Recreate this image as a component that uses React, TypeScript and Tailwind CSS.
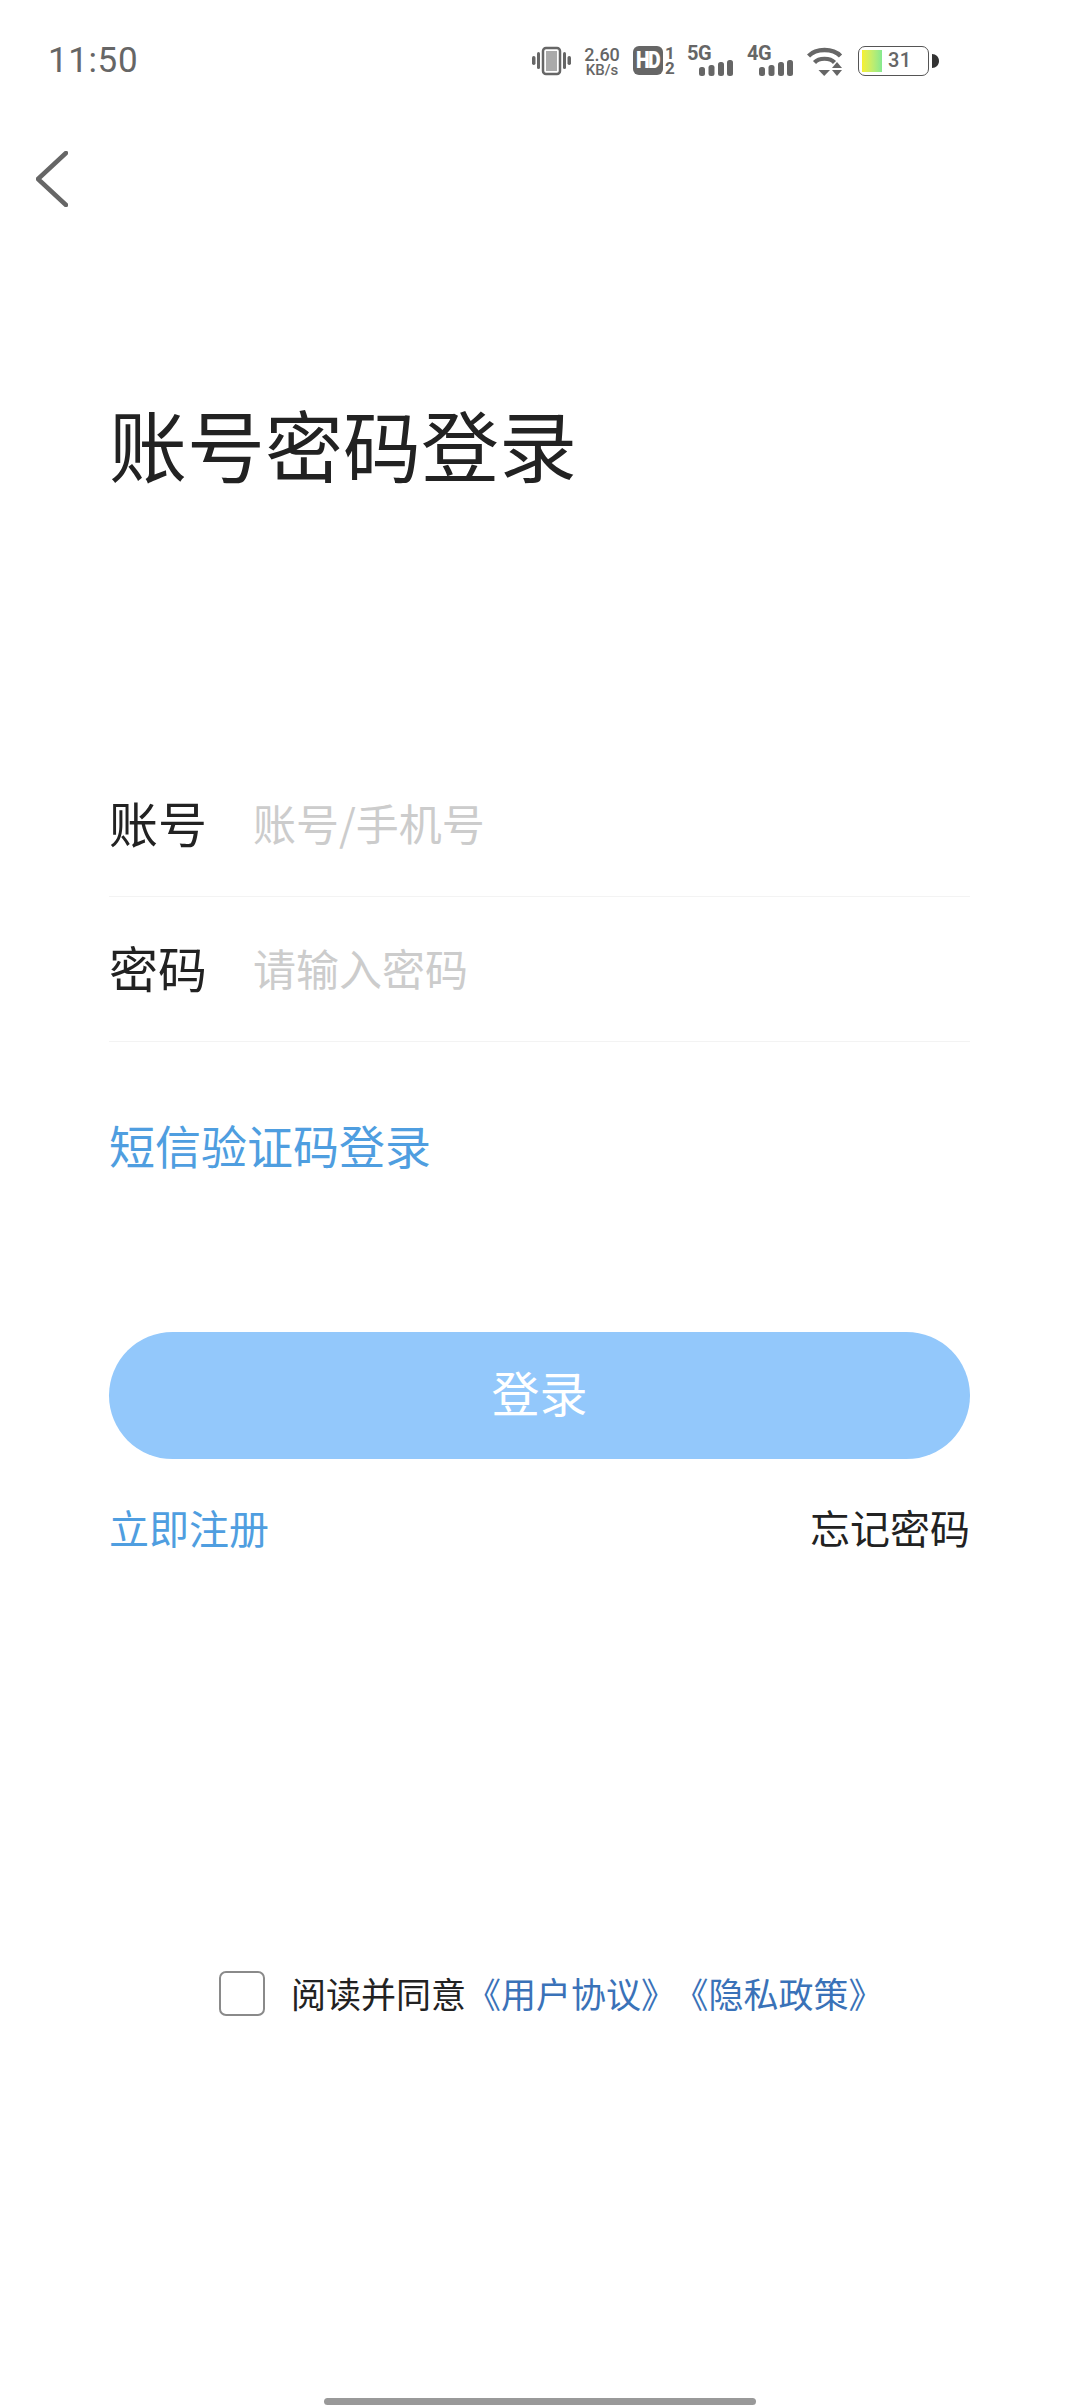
const CJK = "font-['Noto_Sans_CJK_SC','Noto_Sans',sans-serif]";

function Bars() {
  return (
    <svg width="34" height="16" viewBox="0 0 34 16" className="shrink-0">
      <rect x="0" y="7" width="6" height="9" rx="2.5" fill="#666" />
      <rect x="9.5" y="5" width="6" height="11" rx="2.5" fill="#666" />
      <rect x="19" y="2" width="6" height="14" rx="2.5" fill="#666" />
      <rect x="28" y="0" width="6" height="16" rx="2.5" fill="#666" />
    </svg>
  );
}

function Net({ label, className }: { label: string; className: string }) {
  return (
    <div className={`relative h-[30px] w-[46px] shrink-0 ${className}`}>
      <span className="absolute left-0 top-[-5px] font-['Roboto',sans-serif] text-[20px] leading-[24px] font-bold text-[#666] tracking-[-0.5px]">{label}</span>
      <div className="absolute right-0 bottom-0 flex">
        <Bars />
      </div>
    </div>
  );
}

function StatusBar() {
  return (
    <div className="h-[122px] pl-[48px] flex items-start text-[#666]">
      <span className="mt-[41px] font-['Roboto',sans-serif] text-[35px] leading-[40px] tracking-[0.6px] text-[#666]">11:50</span>
      <div className="ml-auto mr-[141px] mt-[46px] flex items-start h-[30px]">
        <svg width="39" height="30" viewBox="0 0 39 30" className="shrink-0">
          <rect x="0" y="10" width="3.5" height="9" rx="1.7" fill="#666" />
          <rect x="5" y="6" width="3" height="17" rx="1.5" fill="#666" />
          <rect x="31" y="6" width="3" height="17" rx="1.5" fill="#666" />
          <rect x="35.5" y="10" width="3.5" height="9" rx="1.7" fill="#666" />
          <rect x="11" y="2" width="17" height="26" rx="3" fill="#fff" stroke="#666" strokeWidth="2.5" />
          <rect x="14" y="5" width="11" height="20" fill="#aaa" />
        </svg>
        <div className="ml-[14px] w-[34px] flex flex-col items-center font-['Roboto',sans-serif] font-medium text-[#666]">
          <span className="text-[18px] leading-[17px]">2.60</span>
          <span className="text-[15px] leading-[15px]">KB/s</span>
        </div>
        <div className="ml-[14px] h-[29px] w-[30px] rounded-[6px] bg-[#666] flex items-center justify-center font-['Roboto',sans-serif] font-black text-[23px] leading-none text-white tracking-[-2px]">
          <span className="inline-block scale-x-[0.85]">HD</span>
        </div>
        <div className="ml-[1px] w-[12px] h-[30px] flex flex-col items-center font-['Roboto',sans-serif] font-bold text-[#666]">
          <span className="text-[17px] leading-[15px]">1</span>
          <span className="text-[17px] leading-[15px]">2</span>
        </div>
        <Net label="5G" className="ml-[11px]" />
        <Net label="4G" className="ml-[14px]" />
        <svg width="36" height="29" viewBox="0 0 36 29" className="ml-[14px] mt-[1px] shrink-0" fill="none">
          <path d="M1.5 9 C 9 1, 26 1, 33.5 9" stroke="#666" strokeWidth="4.4" />
          <path d="M7.5 15.5 C 12 10.5, 23 10.5, 27.5 15.5" stroke="#666" strokeWidth="4.2" />
          <path d="M11.5 23 L23 23 L17.2 29 Z" fill="#666" />
          <path d="M30 15 L35 21 L25 21 Z" fill="#666" />
          <path d="M25 23 L35 23 L30 29 Z" fill="#666" />
        </svg>
        <div className="ml-[15px] relative h-[30px] w-[71px] shrink-0 rounded-[7px] border-[1.5px] border-[#555] bg-white">
          <div className="absolute left-[3px] top-[3px] h-[22px] w-[20px] bg-gradient-to-r from-[#f6f02c] to-[#84e98f]" />
          <span className="absolute left-[29px] top-0 font-['Roboto',sans-serif] font-medium text-[20px] leading-[27px] text-[#666] tracking-[0.3px]">31</span>
        </div>
        <svg width="7" height="14" viewBox="0 0 7 14" className="ml-[3px] mt-[8px] shrink-0">
          <path d="M0 0 C 4 0, 7 3, 7 7 C 7 11, 4 14, 0 14 Z" fill="#333" />
        </svg>
      </div>
    </div>
  );
}

function Row({ label, hint }: { label: string; hint: string }) {
  return (
    <div className="flex items-center h-[145px] pb-[4px] border-b-[1.5px] border-[#f3f3f3]">
      <span className="w-[144px] shrink-0 text-[49px] leading-[64px] text-[#222]">{label}</span>
      <span className="text-[43px] leading-[60px] text-[#cccccc]">{hint}</span>
    </div>
  );
}

export default function App() {
  return (
    <div className={`relative w-[1080px] h-[2408px] overflow-hidden bg-white flex flex-col ${CJK}`}>
      <StatusBar />
      <div className="pl-[36px] h-[60px]">
        <svg width="32" height="56" viewBox="0 0 32 56" fill="none" className="mt-[29px]">
          <path d="M30 2 L2 28 L30 54" stroke="#666" strokeWidth="4.5" strokeLinecap="round" strokeLinejoin="round" />
        </svg>
      </div>
      <div className="pl-[109px] pr-[110px] flex flex-col">
        <h1 className="mt-[206px] text-[78px] leading-[110px] font-normal text-[#222]">账号密码登录</h1>
        <div className="mt-[254px] flex flex-col">
          <Row label="账号" hint="账号/手机号" />
          <Row label="密码" hint="请输入密码" />
        </div>
        <a className="mt-[69px] text-[46px] leading-[66px] text-[#4f9ee0]">短信验证码登录</a>
        <button className="mt-[155px] h-[127px] w-full pb-[10px] rounded-full bg-[#93c8fb] text-white text-[48px] leading-none">登录</button>
        <div className="mt-[39px] flex justify-between text-[40px] leading-[58px]">
          <a className="text-[#4f9ee0]">立即注册</a>
          <a className="text-[#222]">忘记密码</a>
        </div>
      </div>
      <div className="mt-[412px] pl-[219px] flex items-center">
        <div className="w-[46px] h-[45px] rounded-[7px] border-2 border-[#8a8a8a] shrink-0" />
        <p className="ml-[26px] text-[35px] leading-[50px] text-[#222] whitespace-nowrap">
          阅读并同意<span className="text-[#3a72b8]">《用户协议》<span className="ml-[15px]">《隐私政策》</span></span>
        </p>
      </div>
      <div className="absolute left-[324px] bottom-[3px] w-[432px] h-[7px] rounded-full bg-[#999]" />
    </div>
  );
}
